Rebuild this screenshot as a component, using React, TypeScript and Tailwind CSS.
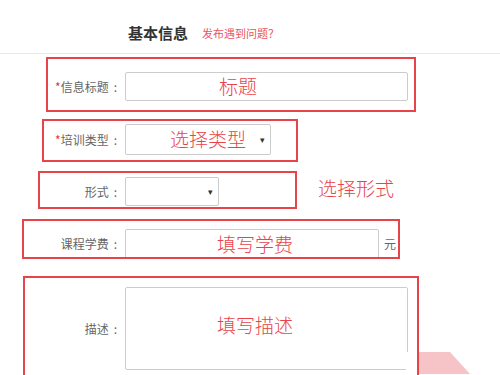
const font = { fontFamily: '"Noto Sans CJK SC", "Liberation Sans", sans-serif' };

function Label({ text, req }: { text: string; req?: boolean }) {
  return (
    <div className="w-[125px] shrink-0 pr-[8px] text-right text-[12px] text-[#666]">
      {req && <span className="text-[#e4393c]">*</span>}
      {text}
      <span className="ml-[5px]">:</span>
    </div>
  );
}

function Mark({ className }: { className: string }) {
  return <div className={`pointer-events-none absolute border-2 border-[#e8434b] ${className}`} />;
}

export default function App() {
  return (
    <div className="relative h-[375px] w-[500px] overflow-hidden bg-white" style={font}>
      <div className="flex h-[54px] items-center border-b border-[#e8e8e8] pl-[128px] pt-[13px]">
        <h2 className="text-[15px] font-bold text-[#333]">基本信息</h2>
        <a className="ml-[14px] text-[11px] text-[#e8545e]">发布遇到问题？</a>
      </div>

      <div className="relative mt-[18px] flex items-center">
        <Label text="信息标题" req />
        <div className="flex h-[29px] w-[283px] items-center rounded-[2px] border border-[#ccc] pl-[93px] text-[19px] font-light text-[#e8434b]">
          标题
        </div>
        <Mark className="left-[46px] top-[-15px] h-[55px] w-[370px]" />
      </div>

      <div className="relative mt-[23px] flex items-center">
        <Label text="培训类型" req />
        <div className="flex h-[31px] w-[146px] items-center justify-between rounded-[2px] border border-[#ccc] pl-[44px] pr-[5px]">
          <span className="text-[19px] font-light text-[#e8434b]">选择类型</span>
          <span className="text-[9px] text-[#333]">▾</span>
        </div>
        <Mark className="left-[42px] top-[-5px] h-[43px] w-[256px]" />
      </div>

      <div className="relative mt-[22px] flex items-center">
        <Label text="形式" />
        <div className="flex h-[29px] w-[94px] items-center justify-end rounded-[2px] border border-[#ccc] pr-[5px]">
          <span className="text-[9px] text-[#333]">▾</span>
        </div>
        <span className="ml-[99px] -mt-[7px] text-[19px] font-light text-[#e8434b]">选择形式</span>
        <Mark className="left-[38px] top-[-6px] h-[38px] w-[259px]" />
      </div>

      <div className="relative mt-[23px] flex items-center">
        <Label text="课程学费" />
        <div className="flex h-[30px] w-[254px] items-center rounded-[2px] border border-[#ccc] pl-[91px] text-[19px] font-light text-[#e8434b]">
          填写学费
        </div>
        <span className="ml-[5px] text-[12px] text-[#666]">元</span>
        <Mark className="left-[22px] top-[-10px] h-[40px] w-[378px]" />
      </div>

      <div className="relative mt-[28px] flex items-center">
        <Label text="描述" />
        <div className="flex h-[83px] w-[283px] items-center rounded-[2px] border border-[#ccc] pb-[6px] pl-[91px] text-[19px] font-light text-[#e8434b]">
          填写描述
        </div>
        <svg className="pointer-events-none absolute left-[406px] top-[65px]" width="70" height="24">
          <rect x="0" y="0" width="14" height="24" fill="#fff" />
          <polygon points="13,0 44,0 64,22 13,22" fill="#f6c3c6" />
        </svg>
        <Mark className="left-[23px] top-[-11px] h-[120px] w-[396px]" />
      </div>
    </div>
  );
}
